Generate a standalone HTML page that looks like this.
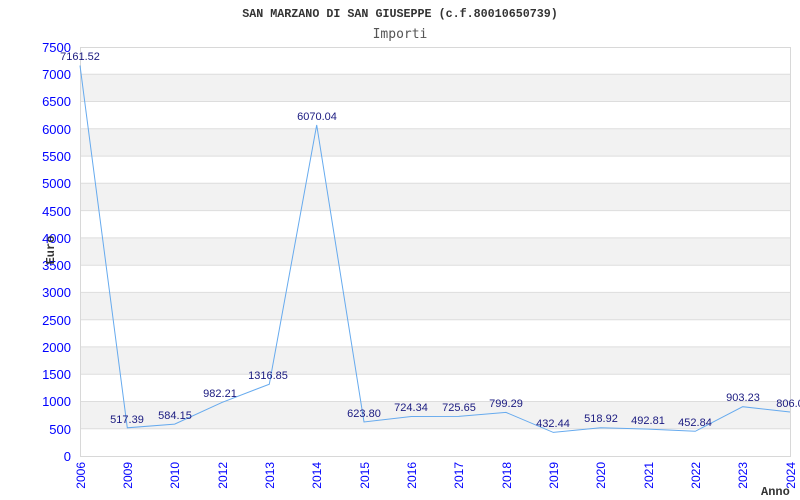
<!DOCTYPE html>
<html><head><meta charset="utf-8"><style>body{margin:0;background:#fff}svg{display:block}</style></head><body>
<svg width="800" height="500" xmlns="http://www.w3.org/2000/svg" font-family="Liberation Sans, sans-serif">
<rect width="800" height="500" fill="#fff"/>
<text x="400" y="17" text-anchor="middle" font-family="Liberation Mono, monospace" font-weight="bold" font-size="11.7" fill="#333">SAN MARZANO DI SAN GIUSEPPE (c.f.80010650739)</text>
<text x="400" y="38" text-anchor="middle" font-family="DejaVu Sans Mono, monospace" font-size="13" fill="#555">Importi</text>
<g fill="#f2f2f2">
<rect x="80" y="74.3" width="710" height="27.3"/>
<rect x="80" y="128.8" width="710" height="27.3"/>
<rect x="80" y="183.3" width="710" height="27.3"/>
<rect x="80" y="237.9" width="710" height="27.3"/>
<rect x="80" y="292.4" width="710" height="27.3"/>
<rect x="80" y="346.9" width="710" height="27.3"/>
<rect x="80" y="401.5" width="710" height="27.3"/>
</g>
<g stroke="#ddd" stroke-width="1">
<line x1="80" x2="790" y1="74.3" y2="74.3"/><line x1="80" x2="790" y1="101.5" y2="101.5"/>
<line x1="80" x2="790" y1="128.8" y2="128.8"/><line x1="80" x2="790" y1="156.1" y2="156.1"/>
<line x1="80" x2="790" y1="183.3" y2="183.3"/><line x1="80" x2="790" y1="210.6" y2="210.6"/>
<line x1="80" x2="790" y1="237.9" y2="237.9"/><line x1="80" x2="790" y1="265.2" y2="265.2"/>
<line x1="80" x2="790" y1="292.4" y2="292.4"/><line x1="80" x2="790" y1="319.7" y2="319.7"/>
<line x1="80" x2="790" y1="346.9" y2="346.9"/><line x1="80" x2="790" y1="374.2" y2="374.2"/>
<line x1="80" x2="790" y1="401.5" y2="401.5"/><line x1="80" x2="790" y1="428.7" y2="428.7"/>
</g>
<rect x="80.5" y="47.5" width="710" height="409" fill="none" stroke="#d8d8d8"/>
<g fill="#0000ff" font-size="13" text-anchor="end">
<text x="71" y="52">7500</text><text x="71" y="79">7000</text><text x="71" y="106">6500</text>
<text x="71" y="134">6000</text><text x="71" y="161">5500</text><text x="71" y="188">5000</text>
<text x="71" y="216">4500</text><text x="71" y="243">4000</text><text x="71" y="270">3500</text>
<text x="71" y="297">3000</text><text x="71" y="325">2500</text><text x="71" y="352">2000</text>
<text x="71" y="379">1500</text><text x="71" y="406">1000</text><text x="71" y="434">500</text>
<text x="71" y="461">0</text>
</g>
<text transform="translate(54,250) rotate(-90)" text-anchor="middle" font-family="Liberation Mono, monospace" font-weight="bold" font-size="12" fill="#333">Euro</text>
<g fill="#0000ff" font-size="12" text-anchor="end">
<text transform="translate(85,462) rotate(-90)">2006</text>
<text transform="translate(132,462) rotate(-90)">2009</text>
<text transform="translate(179,462) rotate(-90)">2010</text>
<text transform="translate(227,462) rotate(-90)">2012</text>
<text transform="translate(274,462) rotate(-90)">2013</text>
<text transform="translate(321,462) rotate(-90)">2014</text>
<text transform="translate(369,462) rotate(-90)">2015</text>
<text transform="translate(416,462) rotate(-90)">2016</text>
<text transform="translate(463,462) rotate(-90)">2017</text>
<text transform="translate(511,462) rotate(-90)">2018</text>
<text transform="translate(558,462) rotate(-90)">2019</text>
<text transform="translate(605,462) rotate(-90)">2020</text>
<text transform="translate(653,462) rotate(-90)">2021</text>
<text transform="translate(700,462) rotate(-90)">2022</text>
<text transform="translate(747,462) rotate(-90)">2023</text>
<text transform="translate(795,462) rotate(-90)">2024</text>
</g>
<text x="761" y="495" font-family="Liberation Mono, monospace" font-weight="bold" font-size="12" fill="#333">Anno</text>
<polyline fill="none" stroke="#66aaee" stroke-width="1" points="80,65.5 127.3,427.8 174.7,424.1 222,402.4 269.3,384.2 316.7,125 364,422 411.3,416.5 458.7,416.4 506,412.4 553.3,432.4 600.7,427.7 648,429.1 695.3,431.3 742.7,406.7 790,412"/>
<g fill="#1a1a80" font-size="11" text-anchor="middle">
<text x="80" y="60">7161.52</text>
<text x="127" y="423">517.39</text>
<text x="175" y="419">584.15</text>
<text x="220" y="397">982.21</text>
<text x="268" y="379">1316.85</text>
<text x="317" y="120">6070.04</text>
<text x="364" y="417">623.80</text>
<text x="411" y="411">724.34</text>
<text x="459" y="411">725.65</text>
<text x="506" y="407">799.29</text>
<text x="553" y="427">432.44</text>
<text x="601" y="422">518.92</text>
<text x="648" y="424">492.81</text>
<text x="695" y="426">452.84</text>
<text x="743" y="401">903.23</text>
<text x="790" y="407">806.0</text>
</g>
</svg>
</body></html>
